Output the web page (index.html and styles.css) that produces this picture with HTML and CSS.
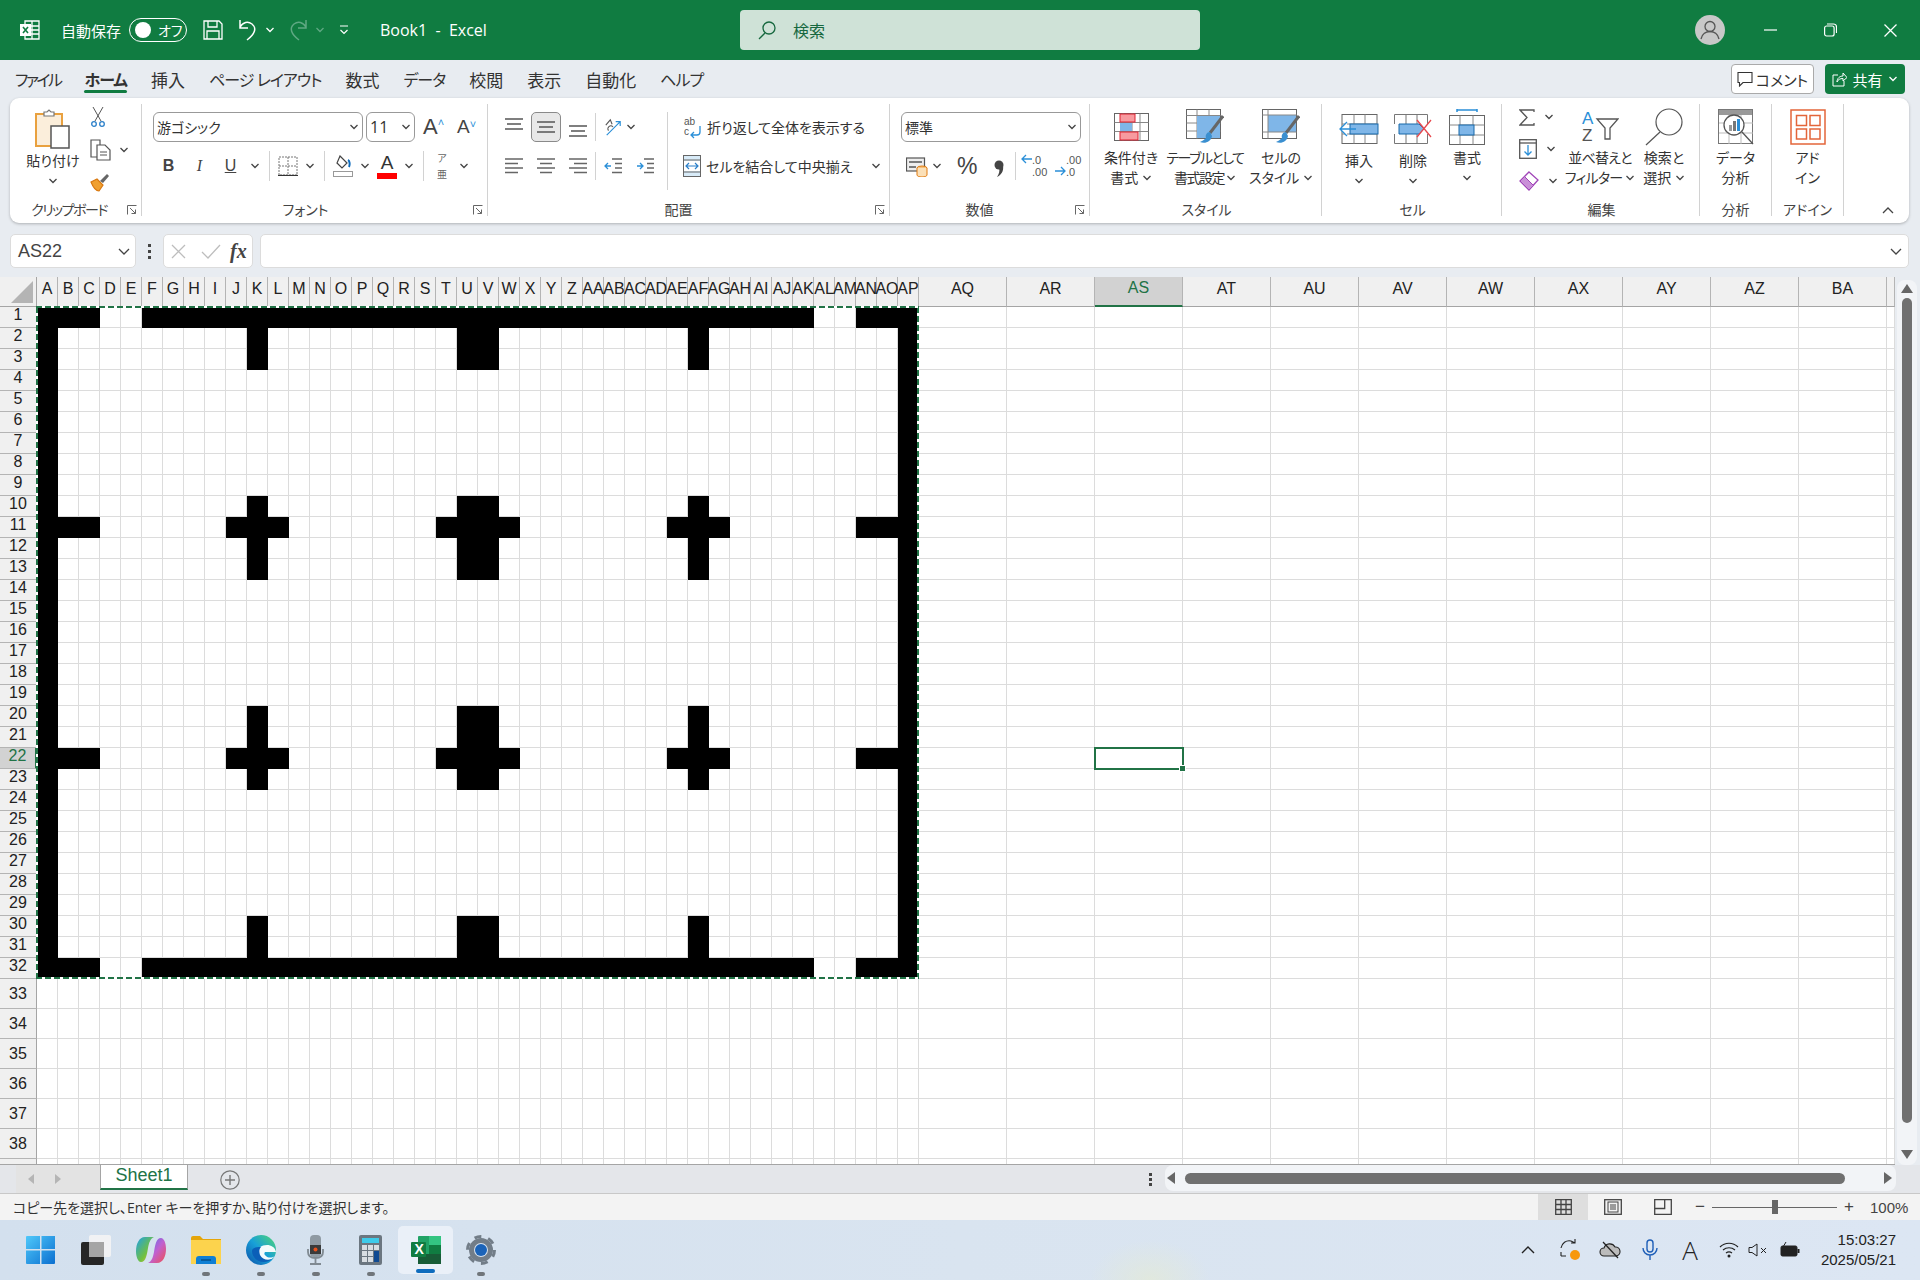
FILE: index.html
```html
<!DOCTYPE html>
<html lang="ja">
<head>
  <meta charset="UTF-8" />
  <title>Book1 - Excel</title>
  <link rel="stylesheet" href="styles.css">
</head>
<body>

  <svg class="defs" width="0" height="0">
    <symbol id="chev" viewBox="0 0 10 6"><path d="M1.5 1l3.5 3.5L8.500 1" fill="none" stroke="#444" stroke-width="1.300"/></symbol>
    <symbol id="launch" viewBox="0 0 10 10"><path d="M.5 9.500v-9h9M3 3l5.500 5.500M8.500 4.500v4h-4" fill="none" stroke="#666" stroke-width="1"/></symbol>
  </svg>

  <!-- title bar -->
  <header class="titlebar">
    <div class="qat">
      <svg class="logo" width="20" height="20" viewBox="0 0 20 20"><path d="M5 1h14v18H5zM5 6h14M5 10h14M5 14h14M12 1v18" fill="none" stroke="#fff" stroke-width="1.300"/><rect x="0" y="4" width="11" height="12" fill="#fff"/><path d="M3 7l5 6M8 7l-5 6" stroke="#107c41" stroke-width="1.600"/></svg>
      <span class="autosave">自動保存</span>
      <span class="toggle"><i class="knob"></i><span>オフ</span></span>
      <svg class="save" width="20" height="20" viewBox="0 0 20 20"><path d="M1 1h15l3 3v15H1zM5 1v6h9V1M4 19v-8h12v8" fill="none" stroke="#fff" stroke-width="1.300"/></svg>
      <svg class="undo" width="20" height="24" viewBox="0 0 20 24"><path d="M2 2v8h8M2 9c3-5 8-6 12-3 5 4 3 10-5 16" fill="none" stroke="#fff" stroke-width="1.500"/></svg>
      <svg class="qchev" width="10" height="6" viewBox="0 0 10 6"><path d="M1.500 1L5 4.500 8.500 1" fill="none" stroke="#fff" stroke-width="1.300"/></svg>
      <svg class="redo" width="20" height="24" viewBox="0 0 20 24"><path d="M18 2v8h-8M18 9c-3-5-8-6-12-3-5 4-3 10 5 16" fill="none" stroke="#5fa883" stroke-width="1.500"/></svg>
      <svg class="qchev dim" width="10" height="6" viewBox="0 0 10 6"><path d="M1.500 1L5 4.500 8.500 1" fill="none" stroke="#5fa883" stroke-width="1.300"/></svg>
      <svg class="custom" width="10" height="10" viewBox="0 0 10 10"><path d="M1 1h8M1.500 5L5 8.500 8.500 5" fill="none" stroke="#fff" stroke-width="1.200"/></svg>
      <span class="doc-name">Book1 &nbsp;-&nbsp; Excel</span>
    </div>
    <div class="search">
      <svg width="20" height="20" viewBox="0 0 20 20"><circle cx="12" cy="8" r="6" fill="none" stroke="#17683f" stroke-width="1.300"/><path d="M8 13l-6 6" stroke="#17683f" stroke-width="1.300"/></svg>
      <span>検索</span>
    </div>
    <div class="winctl">
      <svg class="avatar" width="30" height="30" viewBox="0 0 30 30"><circle cx="15" cy="15" r="15" fill="#c8c8c8"/><circle cx="15" cy="11.500" r="5" fill="none" stroke="#555" stroke-width="1.300"/><path d="M6 24c1-5 5-7.500 9-7.500S23 19 24 24" fill="none" stroke="#555" stroke-width="1.300"/></svg>
      <svg class="min" width="13" height="2" viewBox="0 0 13 2"><path d="M0 1h13" stroke="#fff" stroke-width="1.200"/></svg>
      <svg class="restore" width="13" height="14" viewBox="0 0 13 14"><rect x=".6" y="3" width="9.500" height="10" rx="2" fill="none" stroke="#fff" stroke-width="1.200"/><path d="M3 1h6.500c1.800 0 3 1.200 3 3v6" fill="none" stroke="#fff" stroke-width="1.200"/></svg>
      <svg class="close" width="13" height="13" viewBox="0 0 13 13"><path d="M.5.500l12 12M12.500.500l-12 12" stroke="#fff" stroke-width="1.300"/></svg>
    </div>
  </header>

  <!-- tabs -->
  <nav class="tabs">
    <span class="tab kana tight">ファイル</span>
    <span class="tab kana active">ホーム</span>
    <span class="tab">挿入</span>
    <span class="tab kana">ページ レイアウト</span>
    <span class="tab">数式</span>
    <span class="tab kana">データ</span>
    <span class="tab">校閲</span>
    <span class="tab">表示</span>
    <span class="tab">自動化</span>
    <span class="tab kana">ヘルプ</span>
    <span class="comment-btn">
      <svg width="16" height="16" viewBox="0 0 16 16"><path d="M1 1.500h14v10H6l-3.500 3.500v-3.500H1z" fill="none" stroke="#333" stroke-width="1.100"/></svg>
      コメント
    </span>
    <span class="share-btn">
      <svg width="15" height="15" viewBox="0 0 15 15"><path d="M6 3H1v11h11V9M5 10c0-4 3-6 6-6V1l4 4.500L11 9V6.500c-3 0-5 1-6 3.500z" fill="none" stroke="#fff" stroke-width="1"/></svg>
      共有
      <svg width="10" height="6" viewBox="0 0 10 6"><path d="M1.500 1L5 4.500 8.500 1" fill="none" stroke="#fff" stroke-width="1.300"/></svg>
    </span>
  </nav>

  <!-- ribbon -->
  <section class="ribbon">

    <div class="group g-clip">
      <div class="g-body flex">
        <div class="big paste">
          <div class="big-icon tall">
            <svg width="36" height="40" viewBox="0 0 36 40"><rect x="1" y="5" width="26" height="32" fill="#fbeedb" stroke="#e9a13f" stroke-width="2"/><path d="M9 7V3h3l2-2 2 2h3v4z" fill="#fff" stroke="#777" stroke-width="1.200"/><rect x="16" y="17" width="18" height="22" fill="#fff" stroke="#555" stroke-width="1.500"/></svg>
          </div>
          <div class="big-text">貼り付け</div>
          <svg class="chev" width="10" height="6"><use href="#chev"/></svg>
        </div>
        <div class="clip-tools">
          <svg width="14" height="20" viewBox="0 0 14 20"><path d="M2 0l8 14M12 0L4 14" stroke="#555" stroke-width="1"/><circle cx="3" cy="17" r="2.300" fill="none" stroke="#2a7fc9" stroke-width="1.300"/><circle cx="11" cy="17" r="2.300" fill="none" stroke="#2a7fc9" stroke-width="1.300"/></svg>
          <div class="clip-row">
            <svg width="21" height="22" viewBox="0 0 21 22"><path d="M1 1h9v17H1z" fill="#fff" stroke="#555" stroke-width="1.200"/><path d="M7 6h8l5 5v10H7z" fill="#fff" stroke="#555" stroke-width="1.200"/><path d="M10 13h7M10 16h7" stroke="#555"/></svg>
            <svg class="chev" width="10" height="6"><use href="#chev"/></svg>
          </div>
          <svg width="20" height="20" viewBox="0 0 20 20"><path d="M1 9l6-3 6 6-4 6c-3 0-6-4-8-9z" fill="#f0a030" stroke="#d9780f" stroke-width="1.200"/><path d="M10 8l7-7 2 2-6 7z" fill="#666"/></svg>
        </div>
      </div>
      <div class="g-label">クリップボード</div>
      <svg class="launcher" width="10" height="10"><use href="#launch"/></svg>
    </div>

    <div class="group g-font">
      <div class="g-body">
        <div class="row1 font-row">
          <div class="combo font-name">游ゴシック<svg class="chev" width="10" height="6"><use href="#chev"/></svg></div>
          <div class="combo font-size">11<svg class="chev" width="10" height="6"><use href="#chev"/></svg></div>
          <span class="grow">A<sup>˄</sup></span>
          <span class="shrink">A<sup>˅</sup></span>
        </div>
        <div class="row2 font-tools">
          <span class="t b">B</span>
          <span class="t i">I</span>
          <span class="t u">U</span>
          <svg class="tc" width="10" height="6"><use href="#chev"/></svg>
          <i class="sep"></i>
          <svg class="t26" width="20" height="20" viewBox="0 0 20 20"><path d="M1 1h18v18H1zM10 1v18M1 10h18" fill="none" stroke="#777" stroke-dasharray="2 1"/><path d="M0 19.500h20" stroke="#333" stroke-width="1.200"/></svg>
          <svg class="tc" width="10" height="6"><use href="#chev"/></svg>
          <i class="sep"></i>
          <svg class="t26" width="20" height="22" viewBox="0 0 20 22"><path d="M7 1l7 7-5 5-5-5z" fill="#fff" stroke="#444" stroke-width="1.200"/><path d="M15 5c2 1 2 5 1 7" fill="none" stroke="#0f6cbd" stroke-width="2"/><rect x=".5" y="16.500" width="19" height="5" fill="#fff" stroke="#999"/></svg>
          <svg class="tc" width="10" height="6"><use href="#chev"/></svg>
          <span class="t26 color-a">A<i></i></span>
          <svg class="tc" width="10" height="6"><use href="#chev"/></svg>
          <i class="sep"></i>
          <span class="t26 furi"><small>ア</small><span>亜</span></span>
          <svg class="tc" width="10" height="6"><use href="#chev"/></svg>
        </div>
      </div>
      <div class="g-label">フォント</div>
      <svg class="launcher" width="10" height="10"><use href="#launch"/></svg>
    </div>

    <div class="group g-align">
      <div class="g-body flex">
        <div class="align-left">
          <div class="row1 align-tools">
            <svg class="a32" width="18" height="30" viewBox="0 0 18 30"><path d="M0 7h18M2 12h14M0 17h18" stroke="#555" stroke-width="1.400"/></svg>
            <span class="a32 on"><svg width="18" height="14" viewBox="0 0 18 14"><path d="M0 2h18M2 7h14M0 12h18" stroke="#555" stroke-width="1.400"/></svg></span>
            <svg class="a32" width="18" height="30" viewBox="0 0 18 30"><path d="M0 14h18M2 19h14M0 24h18" stroke="#555" stroke-width="1.400"/></svg>
            <i class="sep tall-sep"></i>
            <svg class="a-o" width="20" height="20" viewBox="0 0 20 20"><path d="M3 19L18 4M13 4h5v5" fill="none" stroke="#2a8fd8" stroke-width="1.300"/><path d="M2 8l5-6 2 5M5 14a3 3 0 1 1 5-4" fill="none" stroke="#555" stroke-width="1.200"/></svg>
            <svg class="tc" width="10" height="6"><use href="#chev"/></svg>
          </div>
          <div class="row2 align-tools">
            <svg class="a32" width="18" height="16" viewBox="0 0 18 16"><path d="M0 1h18M0 5.500h13M0 10h18M0 14.500h13" stroke="#666" stroke-width="1.300"/></svg>
            <svg class="a32" width="18" height="16" viewBox="0 0 18 16"><path d="M0 1h18M3 5.500h12M0 10h18M3 14.500h12" stroke="#666" stroke-width="1.300"/></svg>
            <svg class="a32" width="18" height="16" viewBox="0 0 18 16"><path d="M0 1h18M5 5.500h13M0 10h18M5 14.500h13" stroke="#666" stroke-width="1.300"/></svg>
            <i class="sep tall-sep"></i>
            <svg class="a-o" width="18" height="16" viewBox="0 0 18 16"><path d="M8 1h10M11 5.500h7M11 10h7M8 14.500h10" stroke="#666" stroke-width="1.300"/><path d="M7 8H1M4 5L1 8l3 3" fill="none" stroke="#2a8fd8" stroke-width="1.300"/></svg>
            <svg class="a-o2" width="18" height="16" viewBox="0 0 18 16"><path d="M8 1h10M11 5.500h7M11 10h7M8 14.500h10" stroke="#666" stroke-width="1.300"/><path d="M1 8h6M4 5l3 3-3 3" fill="none" stroke="#2a8fd8" stroke-width="1.300"/></svg>
          </div>
        </div>
        <i class="sep wrap-sep"></i>
        <div class="align-right">
          <div class="row1 wrap-row">
            <svg width="19" height="24" viewBox="0 0 19 24"><text x="1" y="10" class="ic-txt">ab</text><text x="1" y="20" class="ic-txt">c</text><path d="M17 11v6a3 3 0 0 1-3 3H8M11 17l-3 3 3 3" fill="none" stroke="#2a8fd8" stroke-width="1.300"/></svg>
            <span>折り返して全体を表示する</span>
          </div>
          <div class="row2 wrap-row">
            <svg width="18" height="22" viewBox="0 0 18 22"><rect x=".5" y=".5" width="17" height="21" fill="#d8ebf8" stroke="#666"/><path d="M.5 5h17M.5 17h17" stroke="#666"/><rect x="1" y="6" width="16" height="10" fill="#fff"/><path d="M3 11h12M6 8l-3 3 3 3M12 8l3 3-3 3" fill="none" stroke="#2a7fc9" stroke-width="1.200"/></svg>
            <span>セルを結合して中央揃え</span>
            <svg class="chev" width="10" height="6"><use href="#chev"/></svg>
          </div>
        </div>
      </div>
      <div class="g-label">配置</div>
      <svg class="launcher" width="10" height="10"><use href="#launch"/></svg>
    </div>

    <div class="group g-num">
      <div class="g-body">
        <div class="row1 num-row">
          <div class="combo num-fmt">標準<svg class="chev" width="10" height="6"><use href="#chev"/></svg></div>
        </div>
        <div class="row2 num-tools">
          <svg width="22" height="22" viewBox="0 0 22 22"><rect x=".5" y="3" width="18" height="13" fill="#eee" stroke="#555" stroke-width="1.200"/><path d="M3 7h13M3 12h7" stroke="#555" stroke-width="1.500"/><ellipse cx="16" cy="13" rx="5" ry="2" fill="#f5c07a" stroke="#e07b10"/><path d="M11 13v7c0 1 2 2 5 2s5-1 5-2v-7" fill="#fbe0b8" stroke="#e07b10"/></svg>
          <svg class="tc" width="10" height="6"><use href="#chev"/></svg>
          <span class="pct">%</span>
          <svg class="comma" width="10" height="20" viewBox="0 0 10 20"><circle cx="5" cy="6" r="4.500" fill="#444"/><path d="M9 7c1 5-2 9-6 11 2-3 3-6 2-9z" fill="#444"/></svg>
          <i class="sep"></i>
          <span class="dec"><svg width="11" height="10" viewBox="0 0 11 10"><path d="M11 5H1M5 1L1 5l4 4" fill="none" stroke="#2a8fd8" stroke-width="1.300"/></svg><b class="d-a">.0</b><b class="d-b">.00</b></span>
          <span class="dec two"><b class="d-a">.00</b><svg width="11" height="10" viewBox="0 0 11 10"><path d="M0 5h10M6 1l4 4-4 4" fill="none" stroke="#2a8fd8" stroke-width="1.300"/></svg><b class="d-b">.0</b></span>
        </div>
      </div>
      <div class="g-label">数値</div>
      <svg class="launcher" width="10" height="10"><use href="#launch"/></svg>
    </div>

    <div class="group g-style">
      <div class="g-body flex">
        <div class="big w66">
          <div class="big-icon">
            <svg width="35" height="28" viewBox="0 0 35 28"><rect x=".5" y=".5" width="34" height="27" fill="#fff" stroke="#666"/><path d="M9 .5v27M18 .5v27M26 .5v27M.5 9.500h34M.5 18.500h34" stroke="#888"/><rect x="6" y="1" width="15" height="8" fill="#f79a9f" stroke="#d23"/><rect x="6" y="19" width="18" height="8" fill="#f79a9f" stroke="#d23"/><rect x="6" y="10" width="12" height="8" fill="#7fb6e8"/></svg>
          </div>
          <div class="big-text">条件付き<br>書式 <svg class="chev" width="10" height="6"><use href="#chev"/></svg></div>
        </div>
        <div class="big w82 squeeze">
          <div class="big-icon">
            <svg width="38" height="36" viewBox="0 0 38 36"><rect x=".5" y=".5" width="34" height="29" fill="#fff" stroke="#666"/><path d="M.5 6.500h34M.5 14h34M.5 22h34M11 .5v29M23 .500v29" stroke="#888"/><rect x="11" y="7" width="23" height="22" fill="#7fb6e8"/><path d="M37 7L24 24" stroke="#666" stroke-width="3"/><path d="M24 23c-3 0-5 3-4 6-2 2-4 3-6 4 5 2 11 0 12-6z" fill="#3a8fd0"/></svg>
          </div>
          <div class="big-text">テーブルとして<br>書式設定 <svg class="chev" width="10" height="6"><use href="#chev"/></svg></div>
        </div>
        <div class="big w70">
          <div class="big-icon">
            <svg width="38" height="36" viewBox="0 0 38 36"><rect x=".5" y=".5" width="34" height="29" fill="#fff" stroke="#666"/><rect x="6" y="6" width="28" height="17" fill="#7fb6e8"/><path d="M.5 6h34M.5 23h34M6 .5v29" stroke="#888"/><path d="M37 7L24 24" stroke="#666" stroke-width="3"/><path d="M24 23c-3 0-5 3-4 6-2 2-4 3-6 4 5 2 11 0 12-6z" fill="#3a8fd0"/></svg>
          </div>
          <div class="big-text">セルの<br>スタイル <svg class="chev" width="10" height="6"><use href="#chev"/></svg></div>
        </div>
      </div>
      <div class="g-label">スタイル</div>
    </div>

    <div class="group g-cell">
      <div class="g-body flex">
        <div class="big w54">
          <div class="big-icon tall">
            <svg width="40" height="30" viewBox="0 0 40 30"><rect x="3" y=".5" width="35" height="29" fill="#fff" stroke="#666"/><path d="M15 .5v29M26 .500v29M3 10h35M3 20h35" stroke="#888"/><rect x="11" y="10" width="28" height="10" fill="#7fb6e8" stroke="#1769aa"/><path d="M17 15H2M8 8l-7 7 7 7" fill="#fff" stroke="#2a8fd8" stroke-width="1.300"/></svg>
          </div>
          <div class="big-text">挿入</div>
          <svg class="chev" width="10" height="6"><use href="#chev"/></svg>
        </div>
        <div class="big w54">
          <div class="big-icon tall">
            <svg width="38" height="30" viewBox="0 0 38 30"><path d="M.5 10V.5h33V10M.5 20v9.500h33V20M12 .5v10M23 .5v10M12 20v10M23 20v10" fill="none" stroke="#777"/><path d="M5 10h20l5 5-5 5H5z" fill="#7fb6e8" stroke="#1769aa"/><path d="M23 6l14 17M37 6L23 23" stroke="#e8484d" stroke-width="1.300"/></svg>
          </div>
          <div class="big-text">削除</div>
          <svg class="chev" width="10" height="6"><use href="#chev"/></svg>
        </div>
        <div class="big w54">
          <div class="big-icon">
            <svg width="36" height="36" viewBox="0 0 36 36"><path d="M8 1h20M8 0v3M28 0v3" stroke="#2a8fd8" stroke-width="1.500"/><rect x=".5" y="6.500" width="35" height="29" fill="#fff" stroke="#666"/><path d="M11 6.500v29M24 6.500v29M.5 16h35M.5 26h35" stroke="#888"/><rect x="10" y="16" width="15" height="10" fill="#7fb6e8" stroke="#1769aa"/></svg>
          </div>
          <div class="big-text">書式</div>
          <svg class="chev" width="10" height="6"><use href="#chev"/></svg>
        </div>
      </div>
      <div class="g-label">セル</div>
    </div>

    <div class="group g-edit">
      <div class="g-body flex">
        <div class="edit-tools">
          <div class="edit-row">
            <svg width="16" height="17" viewBox="0 0 16 17"><path d="M15 3V1H1l7 7.500L1 16h14v-2" fill="none" stroke="#555" stroke-width="1.300"/></svg>
            <svg class="chev" width="10" height="6"><use href="#chev"/></svg>
          </div>
          <div class="edit-row">
            <svg width="18" height="20" viewBox="0 0 18 20"><rect x=".7" y=".7" width="16.600" height="18.600" fill="#fff" stroke="#555" stroke-width="1.300"/><path d="M.7 4h16.600" stroke="#555" stroke-width="1.300"/><path d="M9 6v10M5.500 12.500L9 16l3.500-3.500" fill="none" stroke="#2a8fd8" stroke-width="1.300"/></svg>
            <svg class="chev" width="10" height="6"><use href="#chev"/></svg>
          </div>
          <div class="edit-row">
            <svg width="20" height="20" viewBox="0 0 20 20"><path d="M10 1l9 8-9 10-9-9z" fill="#fff" stroke="#a044b8" stroke-width="1.300"/><path d="M5.500 5.500l9 9-4.500 4.500-9-9z" fill="#c98fd8" stroke="#a044b8"/></svg>
            <svg class="chev" width="10" height="6"><use href="#chev"/></svg>
          </div>
        </div>
        <div class="big w72 squeeze-s">
          <div class="big-icon">
            <svg width="38" height="38" viewBox="0 0 38 38"><text x="1" y="16" class="ic-az blue">A</text><text x="1" y="33" class="ic-az">Z</text><path d="M16 11h21l-8 9v11h-5V20z" fill="none" stroke="#555" stroke-width="1.300"/></svg>
          </div>
          <div class="big-text">並べ替えと<br>フィルター <svg class="chev" width="10" height="6"><use href="#chev"/></svg></div>
        </div>
        <div class="big w56">
          <div class="big-icon">
            <svg width="38" height="38" viewBox="0 0 38 38"><circle cx="24" cy="14" r="13" fill="none" stroke="#555" stroke-width="1.200"/><path d="M15 24L1 37" stroke="#555" stroke-width="1.200"/></svg>
          </div>
          <div class="big-text">検索と<br>選択 <svg class="chev" width="10" height="6"><use href="#chev"/></svg></div>
        </div>
      </div>
      <div class="g-label">編集</div>
    </div>

    <div class="group g-ana">
      <div class="g-body">
        <div class="big">
          <div class="big-icon">
            <svg width="36" height="36" viewBox="0 0 36 36"><rect x=".5" y=".5" width="34" height="34" fill="#fff" stroke="#777"/><rect x="1" y="1" width="33" height="5" fill="#999"/><path d="M1 14h34M1 24h34M11 6v29M23 6v29" stroke="#bbb"/><circle cx="16" cy="16" r="10" fill="#fff" stroke="#555" stroke-width="1.300"/><rect x="11" y="16" width="3" height="6" fill="#999"/><rect x="15" y="12" width="3" height="10" fill="#777"/><rect x="19" y="10" width="3" height="12" fill="#2a8fd8"/><path d="M24 23l11 12" stroke="#555" stroke-width="1.300"/></svg>
          </div>
          <div class="big-text">データ<br>分析</div>
        </div>
      </div>
      <div class="g-label">分析</div>
    </div>

    <div class="group g-add">
      <div class="g-body">
        <div class="big">
          <div class="big-icon">
            <svg width="36" height="36" viewBox="0 0 36 36"><rect x="1" y="1" width="34" height="34" fill="#fff" stroke="#e3653a" stroke-width="1.500"/><rect x="6.500" y="6.500" width="10" height="10" fill="none" stroke="#e3653a" stroke-width="1.500"/><rect x="20" y="6.500" width="10" height="10" fill="none" stroke="#e3653a" stroke-width="1.500"/><rect x="6.500" y="20" width="10" height="10" fill="none" stroke="#e3653a" stroke-width="1.500"/><rect x="20" y="20" width="10" height="10" fill="none" stroke="#e3653a" stroke-width="1.500"/></svg>
          </div>
          <div class="big-text">アド<br>イン</div>
        </div>
      </div>
      <div class="g-label">アドイン</div>
    </div>

    <div class="ribbon-end">
      <svg width="12" height="7" viewBox="0 0 12 7"><path d="M1 6l5-5 5 5" fill="none" stroke="#444" stroke-width="1.300"/></svg>
    </div>
  </section>

  <!-- formula bar -->
  <section class="formula-bar">
    <div class="name-box">AS22<svg width="12" height="7" viewBox="0 0 12 7"><path d="M1 1l5 5 5-5" fill="none" stroke="#444" stroke-width="1.300"/></svg></div>
    <div class="fb-dots"><i></i><i></i><i></i></div>
    <div class="fx-box">
      <svg width="15" height="15" viewBox="0 0 15 15"><path d="M1 1l13 13M14 1L1 14" stroke="#bdbdbd" stroke-width="1.300"/></svg>
      <svg width="20" height="15" viewBox="0 0 20 15"><path d="M1 8l6 6L19 1" fill="none" stroke="#bdbdbd" stroke-width="1.300"/></svg>
      <span class="fx">fx</span>
    </div>
    <div class="fb-input"><svg width="12" height="7" viewBox="0 0 12 7"><path d="M1 1l5 5 5-5" fill="none" stroke="#444" stroke-width="1.300"/></svg></div>
  </section>

  <!-- worksheet, cells come from grid.js -->
  <main class="work">
    <div class="sheet" id="sheet">
      <div class="ants"></div>
    </div>
    <div class="vscroll">
      <i class="arr-up"></i>
      <div class="v-thumb"></div>
      <i class="arr-down"></i>
    </div>
  </main>

  <!-- sheet tabs -->
  <section class="tabbar">
    <div class="tab-nav"><i class="nav-l"></i><i class="nav-r"></i></div>
    <div class="sheet-tab">Sheet1</div>
    <div class="add-sheet">
      <svg width="20" height="20" viewBox="0 0 20 20"><circle cx="10" cy="10" r="9.200" fill="none" stroke="#777" stroke-width="1.200"/><path d="M10 5v10M5 10h10" stroke="#777" stroke-width="1.400"/></svg>
    </div>
    <div class="fb-dots tab-dots"><i></i><i></i><i></i></div>
    <div class="hscroll">
      <i class="arr-left"></i>
      <div class="h-thumb"></div>
      <i class="arr-right"></i>
    </div>
  </section>

  <!-- status bar -->
  <footer class="statusbar">
    <span class="status-msg">コピー先を選択し、Enter キーを押すか、貼り付けを選択します。</span>
    <div class="views">
      <span class="view on"><svg width="17" height="16" viewBox="0 0 17 16"><path d="M.7.700h15.600v14.600H.7zM.7 5.500h15.600M.7 10.500h15.600M6 .7v14.600M11 .7v14.600" fill="none" stroke="#444" stroke-width="1.300"/></svg></span>
      <span class="view"><svg width="18" height="16" viewBox="0 0 18 16"><rect x=".7" y=".7" width="16.600" height="14.600" fill="none" stroke="#444" stroke-width="1.300"/><rect x="4" y="3" width="10" height="10" fill="none" stroke="#444"/><path d="M6 6h6M6 8h6M6 10h6" stroke="#444"/></svg></span>
      <span class="view"><svg width="18" height="16" viewBox="0 0 18 16"><path d="M.7.700h16.600v14.600H.7zM.7 9.500h10V.7" fill="none" stroke="#444" stroke-width="1.300"/></svg></span>
    </div>
    <div class="zoom">
      <span class="z-btn">−</span>
      <div class="z-track"><i></i></div>
      <span class="z-btn">+</span>
      <span class="z-val">100%</span>
    </div>
  </footer>

  <!-- taskbar -->
  <footer class="taskbar">
    <div class="task-apps">
      <span class="app">
        <svg width="30" height="30" viewBox="0 0 30 30"><defs><linearGradient id="win" x1="0" y1="0" x2="1" y2="1"><stop offset="0" stop-color="#4fc8fa"/><stop offset="1" stop-color="#0b6fd0"/></linearGradient></defs><path d="M1 1h13v13H0V2q0-1 1-1zM15.500 1H29v13H15.500zM0 15.500h14V29H1q-1 0-1-1zM15.500 15.500H29V28q0 1-1 1H15.500z" fill="url(#win)"/></svg>
      </span>
      <span class="app">
        <svg width="30" height="30" viewBox="0 0 30 30"><rect x="0" y="7" width="23" height="23" rx="2" fill="#262626"/><rect x="8" y="0" width="22" height="22" rx="2" fill="#f4f4f4" opacity=".9"/><rect x="8" y="7" width="15" height="15" fill="#a5a5a5"/></svg>
      </span>
      <span class="app">
        <svg width="30" height="30" viewBox="0 0 30 30"><defs><linearGradient id="cp1" x1="0" y1="0" x2="1" y2="1"><stop offset="0" stop-color="#1fa0e8"/><stop offset=".6" stop-color="#70c040"/><stop offset="1" stop-color="#f8c030"/></linearGradient><linearGradient id="cp2" x1="0" y1="0" x2="1" y2="1"><stop offset="0" stop-color="#5070f0"/><stop offset=".5" stop-color="#c060d0"/><stop offset="1" stop-color="#f05050"/></linearGradient></defs><path d="M9 2h9c-4 2-5 6-6 11-1 6-2 14-7 14-3 0-5-5-5-11C0 9 3 2 9 2z" fill="url(#cp1)"/><path d="M21 28h-9c4-2 5-6 6-11 1-6 2-14 7-14 3 0 5 5 5 11 0 7-3 14-9 14z" fill="url(#cp2)"/></svg>
      </span>
      <span class="app dot">
        <svg width="30" height="28" viewBox="0 0 30 28"><path d="M0 2q0-2 2-2h7l3 3h18v25H0z" fill="#e5a50a"/><rect y="4" width="30" height="24" fill="#fcd34d"/><path d="M5 28v-5q0-3 3-3h14q3 0 3 3v5z" fill="#0f7fd4"/><path d="M10 24h10" stroke="#04477f" stroke-width="1.300"/></svg>
      </span>
      <span class="app dot">
        <svg width="30" height="30" viewBox="0 0 30 30"><defs><linearGradient id="edge" x1="0" y1="1" x2="1" y2="0"><stop offset="0" stop-color="#0b4fa8"/><stop offset=".5" stop-color="#18a0d8"/><stop offset="1" stop-color="#50d870"/></linearGradient></defs><circle cx="15" cy="15" r="15" fill="url(#edge)"/><path d="M30 17c-1-5-5-7-9-7-6 0-9 3-9 7 0 5 5 9 10 8 3 0 5-2 7-4-3 2-7 2-9 0-2-1-2-3-1-4h11z" fill="#fff" opacity=".95"/><path d="M6 16c0 6 5 11 12 11 3 0 6-1 8-3-5 2-10 0-12-4-1-3-1-6 1-8-5 0-9 1-9 4z" fill="#0b5fb8"/></svg>
      </span>
      <span class="app dot">
        <svg width="17" height="30" viewBox="0 0 17 30"><rect x="3" y="0" width="11" height="22" rx="4" fill="#8f9aa3"/><rect x="3" y="10" width="11" height="9" fill="#3a3a3a"/><circle cx="8.500" cy="14.500" r="2" fill="#e8501a"/><path d="M1 14v3c0 4 3 6 7.500 6S16 21 16 17v-3M8.500 23v5M3 29h11" fill="none" stroke="#808a92" stroke-width="1.800"/></svg>
      </span>
      <span class="app dot">
        <svg width="23" height="30" viewBox="0 0 23 30"><rect width="23" height="30" rx="2" fill="#6b7680"/><rect x="3" y="3" width="17" height="5" fill="#3ecbea"/><g fill="#d8dde2"><rect x="3" y="10" width="5" height="5"/><rect x="9" y="10" width="5" height="5"/><rect x="15" y="10" width="5" height="5"/><rect x="3" y="16" width="5" height="5"/><rect x="9" y="16" width="5" height="5"/><rect x="3" y="22" width="5" height="5"/><rect x="9" y="22" width="5" height="5"/></g><rect x="15" y="16" width="5" height="11" fill="#104a92"/></svg>
      </span>
      <span class="app active">
        <svg width="30" height="28" viewBox="0 0 30 28"><rect x="7" width="23" height="28" rx="1" fill="#21a366"/><rect x="18" y="0" width="12" height="9" fill="#33c481"/><rect x="7" y="18" width="23" height="10" fill="#185c37"/><rect x="18" y="9" width="12" height="9" fill="#107c41"/><rect y="6" width="15" height="15" rx="1" fill="#107c41"/><text x="3.500" y="18" class="ic-x">X</text></svg>
      </span>
      <span class="app dot">
        <svg width="30" height="30" viewBox="0 0 30 30"><circle cx="15" cy="15" r="13.500" fill="none" stroke="#727d88" stroke-width="3" stroke-dasharray="7 7.140"/><circle cx="15" cy="15" r="9.500" fill="none" stroke="#727d88" stroke-width="5"/><circle cx="15" cy="15" r="6" fill="#1b63b8"/></svg>
      </span>
    </div>

    <div class="tray">
      <svg class="tr chevron-up" width="14" height="8" viewBox="0 0 14 8"><path d="M1 7l6-6 6 6" fill="none" stroke="#222" stroke-width="1.400"/></svg>
      <svg class="tr sync" width="22" height="22" viewBox="0 0 22 22"><path d="M2 9C3 4 7 1 12 2l4 2M16 0v4h-4M2 17h5M2 13v4" fill="none" stroke="#222" stroke-width="1.100"/><circle cx="16" cy="16" r="5" fill="#f7980d"/></svg>
      <svg class="tr" width="22" height="18" viewBox="0 0 22 18"><path d="M5 15a4 4 0 0 1 0-8 6 6 0 0 1 11-1 4.500 4.500 0 0 1 1 9z" fill="#bbb" stroke="#222" stroke-width="1.100"/><path d="M4 1l15 16" stroke="#222" stroke-width="1.200"/></svg>
      <svg class="tr mic" width="16" height="22" viewBox="0 0 16 22"><rect x="5" y="1" width="6" height="12" rx="3" fill="none" stroke="#1f5fb8" stroke-width="1.400"/><path d="M1 9c0 4 3 7 7 7s7-3 7-7M8 16v5" fill="none" stroke="#1f5fb8" stroke-width="1.400"/></svg>
      <span class="tr ime">A</span>
      <svg class="tr wifi" width="20" height="16" viewBox="0 0 20 16"><path d="M1 5c5-5 13-5 18 0M4 8c3.500-3 8.500-3 12 0M7 11c2-1.500 4-1.500 6 0" fill="none" stroke="#222" stroke-width="1.200"/><circle cx="10" cy="14" r="1.500" fill="#222"/></svg>
      <svg class="tr mute" width="20" height="14" viewBox="0 0 20 14"><path d="M1 4.500h3L9 1v12L4 9.500H1z" fill="none" stroke="#222" stroke-width="1"/><path d="M13 5l5 5M18 5l-5 5" stroke="#222" stroke-width="1"/></svg>
      <svg class="tr" width="20" height="16" viewBox="0 0 20 16"><rect x="1" y="4" width="16" height="10" rx="1.500" fill="#222" stroke="#222"/><rect x="17.500" y="7" width="2" height="4" fill="#222"/><path d="M6 0L3 5h3l-1 3" fill="none" stroke="#222"/></svg>
      <div class="clock"><span>15:03:27</span><span>2025/05/21</span></div>
    </div>
  </footer>

  <script src="grid.js"></script>
</body>
</html>
```

FILE: styles.css
```css
* {
  box-sizing: border-box;
}

html, body {
  margin: 0;
  height: 100%;
}

body {
  width: 1920px;
  height: 1280px;
  overflow: hidden;
  background-color: #e8ecf1;
  color: #333;
  font-family: "Open Sans", "Noto Sans CJK JP", sans-serif;
  font-feature-settings: "palt";
  font-size: 15px;
  display: flex;
  flex-direction: column;
}

svg {
  flex: none;
  display: block;
}

.defs {
  position: absolute;
}

/* title bar */
.titlebar {
  height: 60px;
  background-color: #107c41;
  color: #fff;
  display: flex;
  align-items: center;
}

.qat {
  width: 740px;
  display: flex;
  align-items: center;
  padding-left: 20px;
}

.autosave {
  margin-left: 21px;
  width: 68px;
  font-size: 15px;
}

.toggle {
  width: 58px;
  height: 24px;
  border: 1px solid #fff;
  border-radius: 12px;
  display: flex;
  align-items: center;
  padding-left: 5px;
  gap: 7px;
  font-size: 14px;
}

.knob {
  width: 16px;
  height: 16px;
  border-radius: 50%;
  background-color: #fff;
}

.save { margin-left: 16px; }
.undo { margin-left: 15px; }
.qchev { margin-left: 7px; }
.redo { margin-left: 13px; }
.qchev.dim { margin-left: 7px; }
.custom { margin-left: 14px; }

.doc-name {
  margin-left: 31px;
  font-size: 16px;
  white-space: nowrap;
}

.search {
  width: 460px;
  height: 40px;
  background-color: #cfe2d7;
  border-radius: 4px;
  display: flex;
  align-items: center;
  gap: 16px;
  padding-left: 17px;
  color: #17683f;
  font-size: 16px;
}

.winctl {
  flex: 1;
  display: flex;
  align-items: center;
  padding-left: 495px;
}

.min { margin-left: 39px; }
.restore { margin-left: 47px; }
.close { margin-left: 47px; }

/* tabs */
.tabs {
  height: 38px;
  display: flex;
  align-items: center;
  padding: 0 15px;
  font-size: 17px;
  color: #333;
  gap: 24px;
}

.tab {
  position: relative;
  white-space: nowrap;
}

.tab.kana { letter-spacing: -1px; font-size: 16px; }
.tab.tight { letter-spacing: -2.500px; }

.tab.active {
  font-weight: bold;
}

.tab.active::after {
  content: "";
  position: absolute;
  left: 0;
  right: 0;
  bottom: -2px;
  height: 3px;
  background-color: #107c41;
  border-radius: 2px;
}

.comment-btn, .share-btn {
  height: 30px;
  border-radius: 4px;
  display: flex;
  align-items: center;
  font-size: 15px;
}

.comment-btn {
  margin-left: auto;
  width: 83px;
  background-color: #fff;
  border: 1px solid #aaa;
  justify-content: center;
  gap: 3px;
}

.share-btn {
  margin-left: -13px;
  width: 80px;
  background-color: #107c41;
  color: #fff;
  justify-content: center;
  gap: 5px;
}

/* ribbon */
.ribbon {
  height: 125px;
  margin: 0 11px 0 10px;
  background-color: #fff;
  border-radius: 9px;
  box-shadow: 0 1px 3px rgba(0, 0, 0, 0.25);
  padding: 6px 0;
  display: flex;
  color: #333;
  font-size: 14px;
}

.group {
  position: relative;
  height: 112px;
  border-right: 1px solid #d2d2d2;
}

.g-body {
  height: 94px;
  display: flow-root;
}

.g-body.flex { display: flex; }

.g-label {
  height: 18px;
  line-height: 24px;
  text-align: center;
  font-size: 14px;
  color: #444;
  white-space: nowrap;
}

.launcher {
  position: absolute;
  right: 4px;
  bottom: 1px;
}

.g-clip { width: 132px; padding-left: 5px; }
.g-font { width: 346px; }
.g-align { width: 402px; }
.g-num { width: 200px; }
.g-style { width: 232px; padding-left: 8px; }
.g-cell { width: 180px; padding-left: 10px; }
.g-edit { width: 198px; padding-left: 10px; }
.g-ana, .g-add { width: 72px; }
.g-clip .g-label { padding-right: 18px; letter-spacing: -1.500px; }
.g-font .g-label { padding-right: 18px; }
.g-align .g-label { padding-right: 20px; }
.g-num .g-label { padding-right: 20px; }
.g-style .g-label { padding-right: 6px; }
.g-cell .g-label { padding-right: 8px; }
.g-edit .g-label { padding-right: 8px; }

.ribbon-end {
  flex: 1;
  display: flex;
  justify-content: flex-end;
  align-items: flex-end;
  padding: 0 15px 3px 0;
}

.big {
  display: flex;
  flex-direction: column;
  align-items: center;
  padding-top: 2px;
  white-space: nowrap;
}

.big-icon {
  height: 42px;
  display: flex;
  align-items: center;
}

.big-icon.tall { height: 45px; }

.big-text {
  line-height: 20px;
  text-align: center;
  font-size: 14px;
}

.squeeze .big-text { letter-spacing: -1.500px; }
.squeeze-s .big-text { letter-spacing: -0.800px; }

.big-text .chev {
  display: inline-block;
  vertical-align: 2px;
}

.big > .chev { margin-top: 7px; }

.paste { width: 76px; }
.w54 { width: 54px; }
.w56 { width: 56px; }
.w66 { width: 66px; }
.w70 { width: 70px; }
.w72 { width: 72px; }
.w82 { width: 82px; }

.clip-tools {
  height: 86px;
  margin: 3px 0 0 -3px;
  display: flex;
  flex-direction: column;
  justify-content: space-between;
  align-items: flex-start;
  padding-left: 2px;
}

.clip-tools > svg:first-child { margin-left: 1px; }

.clip-row {
  display: flex;
  align-items: center;
  gap: 8px;
}

.row1 {
  height: 30px;
  margin-top: 8px;
  display: flex;
  align-items: center;
}

.row2 {
  height: 32px;
  margin-top: 8px;
  display: flex;
  align-items: center;
}

.combo {
  position: relative;
  height: 30px;
  background-color: #fff;
  border: 1px solid #999;
  border-radius: 6px;
  padding-left: 3px;
  display: flex;
  align-items: center;
  justify-content: space-between;
  padding-right: 3px;
  font-size: 14px;
}

.font-row { padding-left: 11px; }
.font-name { width: 210px; }
.font-size { width: 49px; margin-left: 3px; font-size: 16px; }
.num-fmt { width: 180px; font-size: 14px; }

.grow, .shrink {
  color: #444;
  font-family: "Liberation Sans", sans-serif;
  font-size: 22px;
  font-weight: normal;
  margin-left: 8px;
  display: flex;
  width: 26px;
}

.shrink {
  font-size: 19px;
  margin-left: 8px;
}

.grow sup, .shrink sup {
  font-size: 11px;
  line-height: 12px;
  color: #2a8fd8;
  margin-top: 2px;
}

.font-tools { padding-left: 11px; }

.t {
  width: 31px;
  text-align: center;
  font-family: "Liberation Sans", sans-serif;
  font-size: 16px;
  color: #444;
}

.b { font-weight: bold; }
.i { font-style: italic; font-family: "Liberation Serif", serif; }
.u { text-decoration: underline; }

.tc {
  margin: 0 4px;
}

.sep {
  width: 1px;
  height: 30px;
  background-color: #d2d2d2;
  margin: 0 5px;
  flex: none;
}

.t26 {
  width: 20px;
  margin: 0 3px 0 3px;
}

.color-a {
  display: flex;
  flex-direction: column;
  align-items: center;
  font-family: "Liberation Sans", sans-serif;
  font-size: 19px;
  line-height: 20px;
}

.color-a i {
  width: 20px;
  height: 6px;
  background-color: #f00;
  display: block;
}

.furi {
  display: flex;
  flex-direction: column;
  align-items: center;
  color: #666;
  gap: 1px;
}

.furi small, .furi span {
  display: block;
  font-size: 10px;
  line-height: 15px;
}

.align-left { padding-left: 17px; width: 179px; }
.align-tools { position: relative; }

.a32 {
  width: 18px;
  margin-right: 14px;
}

.a32.on {
  width: 30px;
  height: 30px;
  margin: 0 8px 0 -6px;
  background-color: #e8e8e8;
  border: 1px solid #8a8a8a;
  border-radius: 5px;
  display: flex;
  align-items: center;
  justify-content: center;
}

.tall-sep { margin: 0 8px 0 -6px; height: 28px; }
.a-o { width: 20px; }
.a-o2 { margin-left: 14px; }
.align-tools .a-o { width: 18px; }

.wrap-sep {
  height: 78px;
  margin: 8px 0 0 0;
}

.align-right { padding-left: 15px; }

.wrap-row {
  gap: 5px;
  white-space: nowrap;
  font-size: 14px;
}

.wrap-row .chev { margin-left: 14px; }

.ic-txt {
  font-family: "Liberation Sans", sans-serif;
  font-size: 10px;
  fill: #555;
}

.ic-az {
  font-family: "Liberation Sans", sans-serif;
  font-size: 17px;
  fill: #555;
}

.ic-az.blue { fill: #2a8fd8; }

.num-row { padding-left: 11px; }

.num-tools {
  padding-left: 16px;
}

.pct {
  width: 20px;
  margin-left: 11px;
  font-size: 23px;
  color: #444;
  font-family: "Liberation Sans", sans-serif;
}

.comma {
  margin-left: 17px;
  margin-top: 6px;
}

.num-tools .sep { margin: 0 5px 0 11px; height: 28px; }

.dec {
  position: relative;
  width: 22px;
  height: 24px;
  margin-right: 12px;
  font-size: 11px;
  line-height: 12px;
  font-family: "Liberation Sans", sans-serif;
  color: #555;
  font-weight: normal;
  display: grid;
  grid-template-columns: 11px 11px;
}

.dec b { font-weight: normal; }
.dec .d-b { grid-column: 2; }
.dec.two .d-a { grid-column: 2; }
.dec.two .d-b { grid-column: 2; }
.dec.two svg { grid-column: 1; grid-row: 2; }

.edit-tools {
  width: 52px;
  height: 90px;
  display: flex;
  flex-direction: column;
  justify-content: space-between;
}

.edit-row {
  height: 26px;
  display: flex;
  align-items: center;
  padding-left: 7px;
  gap: 9px;
}

.g-ana .big, .g-add .big { width: 71px; }

/* formula bar */
.formula-bar {
  height: 54px;
  display: flex;
  padding: 11px 11px 9px 10px;
}

.name-box, .fx-box, .fb-input {
  height: 34px;
  background-color: #fff;
  border: 1px solid #dcdcdc;
  border-radius: 5px;
  display: flex;
  align-items: center;
}

.name-box {
  width: 126px;
  justify-content: space-between;
  padding: 0 5px 0 7px;
  font-family: "Liberation Sans", sans-serif;
  font-size: 18px;
  color: #444;
}

.fb-dots {
  width: 27px;
  display: flex;
  flex-direction: column;
  align-items: center;
  justify-content: center;
  gap: 3px;
}

.fb-dots i {
  width: 3px;
  height: 3px;
  background-color: #444;
  display: block;
}

.fx-box {
  width: 90px;
  padding-left: 7px;
  gap: 15px;
}

.fx {
  font-family: "Liberation Serif", serif;
  font-style: italic;
  font-weight: bold;
  font-size: 20px;
  color: #444;
  margin-left: -6px;
}

.fb-input {
  flex: 1;
  margin-left: 7px;
  justify-content: flex-end;
  padding-right: 6px;
}

/* worksheet */
.work {
  height: 888px;
  display: flex;
}

.sheet {
  position: relative;
  width: 1895px;
  height: 888px;
  overflow: hidden;
  background-color: #fff;
  display: grid;
  grid-template-columns: 37px repeat(42, 21px) repeat(11, 88px) 8px;
  grid-template-rows: 30px repeat(32, 21px) repeat(6, 30px) 6px;
  border-bottom: 1px solid #a5a5a5;
}

.corner, .col-head, .row-head {
  background-color: #f0f0f0;
  font-family: "Liberation Sans", sans-serif;
  font-size: 16px;
  color: #222;
  display: flex;
  align-items: center;
  justify-content: center;
  white-space: nowrap;
}

.corner {
  position: relative;
  border-bottom: 1px solid #a5a5a5;
  border-right: 1px solid #a5a5a5;
}

.corner::after {
  content: "";
  position: absolute;
  right: 3px;
  bottom: 3px;
  border-style: solid;
  border-width: 0 0 22px 22px;
  border-color: transparent transparent #b4b4b4 transparent;
}

.col-head {
  border-right: 1px solid #b4b4b4;
  border-bottom: 1px solid #a5a5a5;
  padding-bottom: 6px;
}

.row-head {
  border-right: 1px solid #a5a5a5;
  border-bottom: 1px solid #b4b4b4;
  padding-bottom: 4px;
}

.row-head.tall { padding-bottom: 0; }

.col-head.sel {
  background-color: #d2d2d2;
  color: #217346;
  border-bottom: 2px solid #217346;
}

.row-head.sel {
  background-color: #d2d2d2;
  color: #217346;
  border-right: 2px solid #217346;
}

.cell {
  border-right: 1px solid #dcdcdc;
  border-bottom: 1px solid #dcdcdc;
}

.cell.ink {
  background-color: #000;
  border-color: #000;
}

.cell.active {
  position: relative;
  z-index: 2;
  outline: 2px solid #217346;
  outline-offset: -1px;
}

.cell.active::after {
  content: "";
  position: absolute;
  right: -3px;
  bottom: -3px;
  width: 5px;
  height: 5px;
  background-color: #217346;
  border: 1px solid #fff;
  box-sizing: content-box;
  margin: -1px;
}

.ants {
  position: absolute;
  left: 36px;
  top: 29px;
  width: 883px;
  height: 673px;
  z-index: 1;
  background:
    repeating-linear-gradient(90deg, #217346 0 6px, #fff 6px 9px) top / 100% 2px no-repeat,
    repeating-linear-gradient(90deg, #217346 0 6px, #fff 6px 9px) bottom / 100% 2px no-repeat,
    repeating-linear-gradient(0deg, #217346 0 6px, #fff 6px 9px) left / 2px 100% no-repeat,
    repeating-linear-gradient(0deg, #217346 0 6px, #fff 6px 9px) right / 2px 100% no-repeat;
}

/* vertical scrollbar */
.vscroll {
  flex: 1;
  margin: 3px 3px 0 2px;
  height: 885px;
  background-color: #f2f4f7;
  border-radius: 8px;
  display: flex;
  flex-direction: column;
  align-items: center;
}

.arr-up, .arr-down {
  width: 0;
  height: 0;
  border-left: 6px solid transparent;
  border-right: 6px solid transparent;
  flex: none;
}

.arr-up {
  border-bottom: 9px solid #666;
  margin-top: 4px;
}

.v-thumb {
  width: 10px;
  height: 825px;
  margin-top: 5px;
  background-color: #707070;
  border-radius: 5px;
}

.arr-down {
  border-top: 9px solid #666;
  margin-top: auto;
  margin-bottom: 6px;
}

/* sheet tabs */
.tabbar {
  height: 28px;
  display: flex;
  align-items: flex-start;
  background-color: #e4e6ea;
  position: relative;
}

.tab-nav {
  width: 84px;
  height: 28px;
  margin-left: 16px;
  background-color: #e3e3e3;
  display: flex;
  align-items: center;
  gap: 21px;
  padding-left: 12px;
}

.nav-l, .nav-r {
  width: 0;
  height: 0;
  border-top: 5px solid transparent;
  border-bottom: 5px solid transparent;
}

.nav-l { border-right: 6px solid #b5b5b5; }
.nav-r { border-left: 6px solid #b5b5b5; }

.sheet-tab {
  width: 88px;
  height: 25px;
  background-color: #fff;
  border-left: 1px solid #a5a5a5;
  border-right: 1px solid #a5a5a5;
  border-bottom: 2px solid #217346;
  color: #217346;
  font-family: "Liberation Sans", sans-serif;
  font-size: 18px;
  text-align: center;
  line-height: 20px;
}

.add-sheet {
  width: 56px;
  height: 28px;
  padding: 5px 0 0 32px;
}

.tab-dots {
  width: 20px;
  height: 28px;
  margin-left: 896px;
  gap: 2px;
}

.hscroll {
  width: 731px;
  height: 26px;
  margin-left: 5px;
  background-color: #f2f4f7;
  border-radius: 8px;
  display: flex;
  align-items: center;
}

.arr-left, .arr-right {
  width: 0;
  height: 0;
  border-top: 6px solid transparent;
  border-bottom: 6px solid transparent;
  flex: none;
}

.arr-left {
  border-right: 8px solid #666;
  margin-left: 2px;
}

.h-thumb {
  width: 660px;
  height: 11px;
  margin-left: 10px;
  background-color: #707070;
  border-radius: 6px;
}

.arr-right {
  border-left: 8px solid #666;
  margin-left: auto;
  margin-right: 4px;
}

/* status bar */
.statusbar {
  height: 27px;
  background-color: #f3f3f3;
  border-top: 1px solid #c8c8c8;
  display: flex;
  align-items: center;
  padding-left: 13px;
  font-size: 14px;
  color: #333;
}

.status-msg { width: 1525px; }

.views {
  display: flex;
  height: 26px;
}

.view {
  width: 50px;
  display: flex;
  align-items: center;
  justify-content: center;
}

.view.on { background-color: #dedede; }

.zoom {
  display: flex;
  align-items: center;
  margin-left: 5px;
}

.z-btn {
  width: 14px;
  text-align: center;
  font-family: "Liberation Sans", sans-serif;
  font-size: 17px;
  color: #444;
}

.z-track {
  position: relative;
  width: 125px;
  height: 1px;
  margin: 0 5px;
  background-color: #666;
}

.z-track i {
  position: absolute;
  left: 60px;
  top: -7px;
  width: 6px;
  height: 14px;
  background-color: #666;
}

.z-val {
  margin-left: 14px;
  font-family: "Liberation Sans", sans-serif;
  font-size: 15px;
  color: #444;
}

/* taskbar */
.taskbar {
  flex: 1;
  display: flex;
  align-items: center;
  background:
    radial-gradient(ellipse 60px 40px at 1150px 60px, rgba(228, 234, 214, 0.7), rgba(228, 234, 214, 0)),
    linear-gradient(90deg, #d3e0ee, #d9e4f0 50%, #dce6f3);
}

.task-apps {
  display: flex;
  padding-left: 13px;
  height: 60px;
  align-items: center;
}

.app {
  position: relative;
  width: 55px;
  height: 48px;
  display: flex;
  align-items: center;
  justify-content: center;
}

.app.dot::after, .app.active::after {
  content: "";
  position: absolute;
  bottom: -2px;
  left: 50%;
  margin-left: -4px;
  width: 8px;
  height: 4px;
  border-radius: 2px;
  background-color: #70757a;
}

.app.active {
  background-color: #eaf0f8;
  border-radius: 5px;
}

.app.active::after {
  width: 19px;
  margin-left: -10px;
  bottom: 1px;
  background-color: #0f6cbd;
}

.ic-x {
  font-family: "Liberation Sans", sans-serif;
  font-weight: bold;
  font-size: 14px;
  fill: #fff;
}

.tray {
  margin-left: auto;
  display: flex;
  align-items: center;
  height: 60px;
  padding-right: 24px;
}

.tr { margin-right: 21px; }
.tr.chevron-up { margin-right: 24px; }
.tr.sync { margin-right: 18px; }
.tr.mic { margin-right: 24px; }
.tr.wifi { margin-right: 9px; }
.tr.mute { margin-right: 12px; }

.ime {
  font-family: "Open Sans", sans-serif;
  font-size: 26px;
  font-weight: 300;
  color: #222;
}

.clock {
  display: flex;
  flex-direction: column;
  align-items: flex-end;
  font-size: 15px;
  line-height: 20px;
  font-family: "Liberation Sans", sans-serif;
  color: #222;
}
```

FILE: grid.js
```js
// builds the worksheet headers and cells
const sheet = document.getElementById('sheet');

function colName(n) {
  const a = 'ABCDEFGHIJKLMNOPQRSTUVWXYZ';
  if (n < 26) return a[n];
  return a[Math.floor(n / 26) - 1] + a[n % 26];
}

function col(name) {
  let n = 0;
  for (const c of name) n = n * 26 + c.charCodeAt(0) - 64;
  return n - 1;
}

const COLS = col('BB') + 1;
const ROWS = 39;
const WALL_L = [col('A'), col('C')];
const WALL_R = [col('AN'), col('AP')];
const FRAME_TOP = [WALL_L, [col('F'), col('AK')], WALL_R];
const STEMS = [[col('K'), col('K')], [col('U'), col('V')], [col('AF'), col('AF')]];
const ARMS = [[col('J'), col('L')], [col('T'), col('W')], [col('AE'), col('AG')]];

function inRanges(c, ranges) {
  return ranges.some(r => c >= r[0] && c <= r[1]);
}

function isInk(r, c) {
  if (c > col('AP') || r > 32) return false;
  if (r === 1 || r === 32) return inRanges(c, FRAME_TOP);
  if (c === col('A') || c === col('AP')) return true;
  if ([2, 3, 30, 31].includes(r)) return inRanges(c, STEMS);
  if (r === 11 || r === 22) return inRanges(c, ARMS) || inRanges(c, [WALL_L, WALL_R]);
  if ([10, 12, 13, 20, 21, 23].includes(r)) return inRanges(c, STEMS);
  return false;
}

function add(cls, text) {
  const el = document.createElement('div');
  el.className = cls;
  if (text) el.textContent = text;
  sheet.appendChild(el);
}

const activeCol = col('AS');
const activeRow = 22;

add('corner');
for (let c = 0; c < COLS; c++) {
  add('col-head' + (c === activeCol ? ' sel' : ''), c === COLS - 1 ? '' : colName(c));
}

for (let r = 1; r <= ROWS; r++) {
  let cls = 'row-head';
  if (r === activeRow) cls += ' sel';
  if (r > 32) cls += ' tall';
  add(cls, r === ROWS ? '' : String(r));
  for (let c = 0; c < COLS; c++) {
    let cellCls = 'cell';
    if (isInk(r, c)) cellCls += ' ink';
    if (r === activeRow && c === activeCol) cellCls += ' active';
    add(cellCls);
  }
}
```
